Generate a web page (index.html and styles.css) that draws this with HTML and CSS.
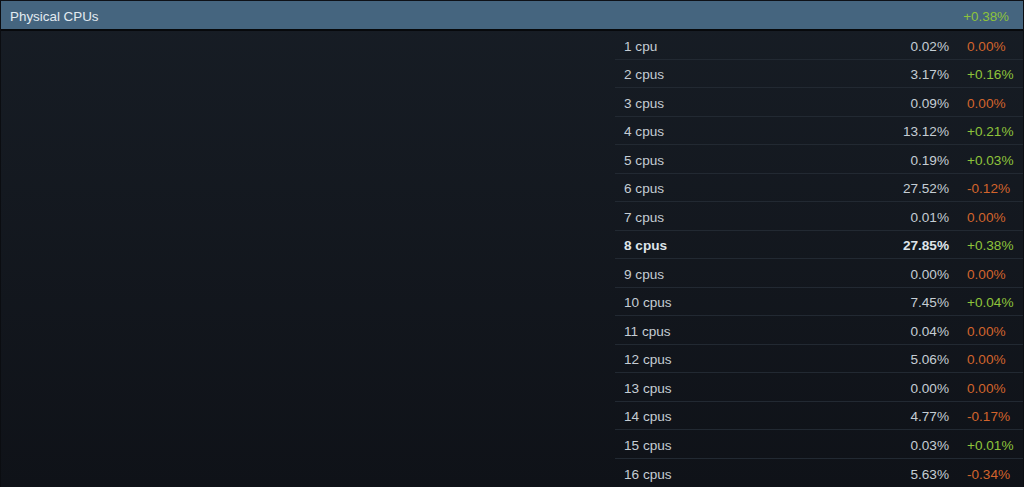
FILE: index.html
```html
<!DOCTYPE html>
<html>
<head>
<meta charset="utf-8">
<link rel="stylesheet" href="styles.css">
</head>
<body>
<div class="panel">
  <div class="header">
    <span class="title">Physical CPUs</span>
    <span class="hchange up">+0.38%</span>
  </div>
  <div class="body">
    <div class="spacer"></div>
    <div class="table">
      <div class="row"><span class="name">1 cpu</span><span class="val">0.02%</span><span class="chg down">0.00%</span></div>
      <div class="row"><span class="name">2 cpus</span><span class="val">3.17%</span><span class="chg up">+0.16%</span></div>
      <div class="row"><span class="name">3 cpus</span><span class="val">0.09%</span><span class="chg down">0.00%</span></div>
      <div class="row"><span class="name">4 cpus</span><span class="val">13.12%</span><span class="chg up">+0.21%</span></div>
      <div class="row"><span class="name">5 cpus</span><span class="val">0.19%</span><span class="chg up">+0.03%</span></div>
      <div class="row"><span class="name">6 cpus</span><span class="val">27.52%</span><span class="chg down">-0.12%</span></div>
      <div class="row"><span class="name">7 cpus</span><span class="val">0.01%</span><span class="chg down">0.00%</span></div>
      <div class="row bold"><span class="name">8 cpus</span><span class="val">27.85%</span><span class="chg up">+0.38%</span></div>
      <div class="row"><span class="name">9 cpus</span><span class="val">0.00%</span><span class="chg down">0.00%</span></div>
      <div class="row"><span class="name">10 cpus</span><span class="val">7.45%</span><span class="chg up">+0.04%</span></div>
      <div class="row"><span class="name">11 cpus</span><span class="val">0.04%</span><span class="chg down">0.00%</span></div>
      <div class="row"><span class="name">12 cpus</span><span class="val">5.06%</span><span class="chg down">0.00%</span></div>
      <div class="row"><span class="name">13 cpus</span><span class="val">0.00%</span><span class="chg down">0.00%</span></div>
      <div class="row"><span class="name">14 cpus</span><span class="val">4.77%</span><span class="chg down">-0.17%</span></div>
      <div class="row"><span class="name">15 cpus</span><span class="val">0.03%</span><span class="chg up">+0.01%</span></div>
      <div class="row"><span class="name">16 cpus</span><span class="val">5.63%</span><span class="chg down">-0.34%</span></div>
    </div>
  </div>
</div>
</body>
</html>
```

FILE: styles.css
```css
html, body {
  margin: 0;
  padding: 0;
  background: #0e1117;
}
body {
  font-family: "Liberation Sans", Arial, Helvetica, sans-serif;
  width: 1024px;
  height: 487px;
  overflow: hidden;
}
.panel {
  height: 487px;
  background: linear-gradient(to bottom, #171d25 0%, #0f1218 100%);
  border-left: 1px solid #0b0d11;
  border-right: 1px solid #0b0d11;
  box-sizing: border-box;
}
.header {
  margin-top: 1px;
  height: 26px;
  padding: 2px 14px 0 9px;
  background: #45657f;
  border-bottom: 2px solid #07090c;
  display: flex;
  align-items: center;
  justify-content: space-between;
  font-size: 13.4px;
}
.title {
  color: #e3ebf1;
}
.up { color: #8ec33b; }
.down { color: #d2642c; }
.body {
  display: flex;
}
.spacer {
  flex: 1;
}
.table {
  width: 408px;
  font-size: 13.6px;
  color: #c5cdd4;
}
.row {
  display: flex;
  align-items: center;
  height: 28.5px;
  box-sizing: border-box;
  padding-top: 3px;
  border-bottom: 1px solid #222932;
}
.row:last-child {
  border-bottom: none;
}
.name {
  flex: 1;
  padding-left: 9px;
}
.val {
  text-align: right;
  padding-right: 18px;
}
.chg {
  width: 56px;
}
.bold {
  font-weight: bold;
  color: #dfe5ea;
}
.bold .chg {
  font-weight: normal;
}
```
